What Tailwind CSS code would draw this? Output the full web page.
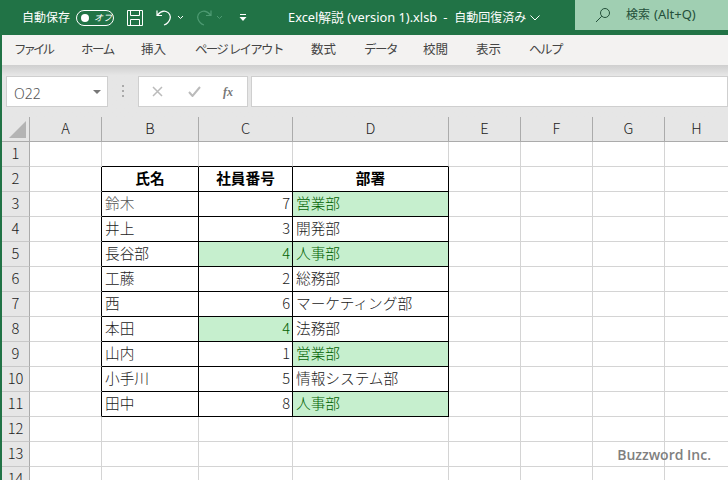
<!DOCTYPE html>
<html lang="ja">
<head>
<meta charset="UTF-8">
<title>Excel</title>
<script src="https://cdn.jsdelivr.net/npm/@tailwindcss/browser@4"></script>
</head>
<body class="w-[728px] h-[480px] overflow-hidden bg-white font-['Noto_Sans','Noto_Sans_CJK_JP',sans-serif] border-l-2 border-[#217346]">
<div class="w-[726px]">
  <!-- title bar -->
  <div class="h-[35px] bg-[#217346] text-white flex items-center text-[12px] -ml-[2px] w-[728px]">
    <span class="ml-[22px]">自動保存</span>
    <div class="ml-[6px] w-[38px] h-[16px] rounded-full border border-white flex items-center pl-[4px] gap-[5px]">
      <span class="w-[8px] h-[8px] rounded-full bg-white"></span><span class="text-[9px] leading-none italic">オフ</span>
    </div>
    <svg class="ml-[13px]" width="16" height="16" viewBox="0 0 16 16" fill="none" stroke="#fff"><path d="M.5.5h15v15H.5zM3.5.5v5h9v-5M3.5 15.5v-6h9v6"/></svg>
    <svg class="ml-[13px]" width="17" height="17" viewBox="0 0 17 17" fill="none" stroke="#fff" stroke-width="1.2"><path d="M1 1.5v5h5M1.5 6C4 3 7 1.5 10 2.500c3.500 1.200 5 4.500 4 7.500-.7 2-3 5-6 6"/></svg>
    <svg class="ml-[4px]" width="7" height="5" viewBox="0 0 7 5" fill="none" stroke="#fff"><path d="M1 1l2.500 2.500L6 1"/></svg>
    <svg class="ml-[11px]" width="17" height="17" viewBox="0 0 17 17" fill="none" stroke="#4d9a72" stroke-width="1.2"><path d="M16 1.500v5h-5M15.500 6C13 3 10 1.500 7 2.500 3.500 3.700 2 7 3 10c.7 2 3 5 6 6"/></svg>
    <svg class="ml-[4px]" width="7" height="5" viewBox="0 0 7 5" fill="none" stroke="#4d9a72"><path d="M1 1l2.500 2.500L6 1"/></svg>
    <svg class="ml-[16px]" width="8" height="8" viewBox="0 0 8 8" fill="#fff"><path d="M1 0h6v1H1zM.5 3h7L4 7z"/></svg>
    <span class="ml-[41px] whitespace-nowrap text-[12.8px]">Excel解説 (version 1).xlsb</span>
    <span class="ml-[6px] text-[13px]">-</span>
    <span class="ml-[7px] whitespace-nowrap">自動回復済み</span>
    <svg class="ml-[4px]" width="10" height="6" viewBox="0 0 10 6" fill="none" stroke="#fff"><path d="M.5.5L5 5 9.500.5"/></svg>
    <div class="ml-auto w-[153px] h-[30px] mb-[5px] bg-[#a0cfb2] text-[#24503a] flex items-center pl-[20px]">
      <svg width="16" height="16" viewBox="0 0 16 16" fill="none" stroke="#24503a"><circle cx="10" cy="6" r="4.500"/><path d="M6.800 9.200L1 15"/></svg>
      <span class="ml-[15px]">検索</span>
      <span class="ml-[4px] text-[13px]">(Alt+Q)</span>
    </div>
  </div>
  <!-- ribbon tabs -->
  <div class="h-[30px] bg-[#f3f2f1] flex items-center text-[12.5px] text-[#444] whitespace-nowrap">
    <span class="ml-[12px] w-[38px] tracking-[-3px]">ファイル</span>
    <span class="ml-[29px] w-[33px] tracking-[-1.5px]">ホーム</span>
    <span class="ml-[27px] w-[25px]">挿入</span>
    <span class="ml-[29px] w-[87px] tracking-[-1.7px]">ページ レイアウト</span>
    <span class="ml-[29px] w-[25px]">数式</span>
    <span class="ml-[28px] w-[32px] tracking-[-1.5px]">データ</span>
    <span class="ml-[27px] w-[25px]">校閲</span>
    <span class="ml-[28px] w-[25px]">表示</span>
    <span class="ml-[28px] w-[32px] tracking-[-1.5px]">ヘルプ</span>
  </div>
  <!-- formula bar -->
  <div class="h-[52px] bg-[#e6e6e6] bg-gradient-to-b from-[#cfcfcf] to-[#e6e6e6] to-[20%] flex items-start pt-[11px]">
    <div class="ml-[4px] w-[102px] h-[31px] bg-white border border-[#cfcfcf] flex items-center pl-[7px] pt-[4px] text-[14px] font-light text-[#555]">
      O22
      <svg class="ml-auto mr-[6px] -mt-[4px]" width="8" height="4" viewBox="0 0 8 4" fill="#777"><path d="M0 0h8L4 4z"/></svg>
    </div>
    <div class="ml-[14px] mt-[9px] flex flex-col gap-[3px]">
      <span class="w-[2px] h-[2px] bg-[#aaa]"></span><span class="w-[2px] h-[2px] bg-[#aaa]"></span><span class="w-[2px] h-[2px] bg-[#aaa]"></span>
    </div>
    <div class="ml-[14px] w-[110px] h-[31px] bg-white border border-[#cfcfcf] flex items-center">
      <svg class="ml-[13px]" width="11" height="11" viewBox="0 0 11 11" fill="none" stroke="#bbb" stroke-width="1.500"><path d="M1 1l9 9M10 1l-9 9"/></svg>
      <svg class="ml-[25px]" width="13" height="11" viewBox="0 0 13 11" fill="none" stroke="#bbb" stroke-width="2"><path d="M1 6l3.500 4L12 1"/></svg>
      <span class="ml-[22px] text-[12px] italic font-bold font-['Liberation_Serif',serif] text-[#777]">fx</span>
    </div>
    <div class="ml-[3px] flex-1 h-[31px] bg-white border border-[#cfcfcf]"></div>
  </div>
  <!-- sheet -->
  <div class="grid grid-cols-[28px_72px_97px_94px_156px_72px_72px_72px_63px] auto-rows-[25px] text-[14.67px] font-light text-[#222] font-['Noto_Sans_CJK_JP',sans-serif] [&>div]:pb-[2px]">
    <!-- header -->
    <div class="h-[25px] bg-[#e6e6e6] border-r border-b border-[#ababab] relative"><svg class="absolute right-[3px] bottom-[3px]" width="17" height="17" viewBox="0 0 17 17" fill="#b4b4b4"><path d="M17 0v17H0z"/></svg></div>
    <div class="bg-[#e6e6e6] border-r border-b border-[#ababab] flex items-center justify-center">A</div>
    <div class="bg-[#e6e6e6] border-r border-b border-[#ababab] flex items-center justify-center">B</div>
    <div class="bg-[#e6e6e6] border-r border-b border-[#ababab] flex items-center justify-center">C</div>
    <div class="bg-[#e6e6e6] border-r border-b border-[#ababab] flex items-center justify-center">D</div>
    <div class="bg-[#e6e6e6] border-r border-b border-[#ababab] flex items-center justify-center">E</div>
    <div class="bg-[#e6e6e6] border-r border-b border-[#ababab] flex items-center justify-center">F</div>
    <div class="bg-[#e6e6e6] border-r border-b border-[#ababab] flex items-center justify-center">G</div>
    <div class="bg-[#e6e6e6] border-b border-[#ababab] flex items-center justify-center">H</div>
    <!-- row 1 -->
    <div class="bg-[#e6e6e6] border-r border-b border-r-[#ababab] border-b-[#c8c8c8] flex items-center justify-center">1</div>
    <div class="border-r border-b border-[#d4d4d4]"></div>
    <div class="border-r border-b border-[#d4d4d4] border-b-black"></div>
    <div class="border-r border-b border-[#d4d4d4] border-b-black"></div>
    <div class="border-r border-b border-[#d4d4d4] border-b-black"></div>
    <div class="border-r border-b border-[#d4d4d4]"></div>
    <div class="border-r border-b border-[#d4d4d4]"></div>
    <div class="border-r border-b border-[#d4d4d4]"></div>
    <div class="border-b border-[#d4d4d4]"></div>
    <!-- row 2 -->
    <div class="bg-[#e6e6e6] border-r border-b border-r-[#ababab] border-b-[#c8c8c8] flex items-center justify-center">2</div>
    <div class="border-r border-b border-[#d4d4d4] border-r-black"></div>
    <div class="border-r border-b border-black flex items-center justify-center font-bold text-black">氏名</div>
    <div class="border-r border-b border-black flex items-center justify-center font-bold text-black">社員番号</div>
    <div class="border-r border-b border-black flex items-center justify-center font-bold text-black">部署</div>
    <div class="border-r border-b border-[#d4d4d4]"></div>
    <div class="border-r border-b border-[#d4d4d4]"></div>
    <div class="border-r border-b border-[#d4d4d4]"></div>
    <div class="border-b border-[#d4d4d4]"></div>
    <!-- row 3 -->
    <div class="bg-[#e6e6e6] border-r border-b border-r-[#ababab] border-b-[#c8c8c8] flex items-center justify-center">3</div>
    <div class="border-r border-b border-[#d4d4d4] border-r-black"></div>
    <div class="border-r border-b border-black flex items-center pl-[3px] text-[#555]">鈴木</div>
    <div class="border-r border-b border-black flex items-center justify-end pr-[2px]">7</div>
    <div class="border-r border-b border-black flex items-center pl-[3px] bg-[#c6efce] text-[#006100]">営業部</div>
    <div class="border-r border-b border-[#d4d4d4]"></div>
    <div class="border-r border-b border-[#d4d4d4]"></div>
    <div class="border-r border-b border-[#d4d4d4]"></div>
    <div class="border-b border-[#d4d4d4]"></div>
    <!-- row 4 -->
    <div class="bg-[#e6e6e6] border-r border-b border-r-[#ababab] border-b-[#c8c8c8] flex items-center justify-center">4</div>
    <div class="border-r border-b border-[#d4d4d4] border-r-black"></div>
    <div class="border-r border-b border-black flex items-center pl-[3px]">井上</div>
    <div class="border-r border-b border-black flex items-center justify-end pr-[2px]">3</div>
    <div class="border-r border-b border-black flex items-center pl-[3px]">開発部</div>
    <div class="border-r border-b border-[#d4d4d4]"></div>
    <div class="border-r border-b border-[#d4d4d4]"></div>
    <div class="border-r border-b border-[#d4d4d4]"></div>
    <div class="border-b border-[#d4d4d4]"></div>
    <!-- row 5 -->
    <div class="bg-[#e6e6e6] border-r border-b border-r-[#ababab] border-b-[#c8c8c8] flex items-center justify-center">5</div>
    <div class="border-r border-b border-[#d4d4d4] border-r-black"></div>
    <div class="border-r border-b border-black flex items-center pl-[3px]">長谷部</div>
    <div class="border-r border-b border-black flex items-center justify-end pr-[2px] bg-[#c6efce] text-[#006100]">4</div>
    <div class="border-r border-b border-black flex items-center pl-[3px] bg-[#c6efce] text-[#006100]">人事部</div>
    <div class="border-r border-b border-[#d4d4d4]"></div>
    <div class="border-r border-b border-[#d4d4d4]"></div>
    <div class="border-r border-b border-[#d4d4d4]"></div>
    <div class="border-b border-[#d4d4d4]"></div>
    <!-- row 6 -->
    <div class="bg-[#e6e6e6] border-r border-b border-r-[#ababab] border-b-[#c8c8c8] flex items-center justify-center">6</div>
    <div class="border-r border-b border-[#d4d4d4] border-r-black"></div>
    <div class="border-r border-b border-black flex items-center pl-[3px]">工藤</div>
    <div class="border-r border-b border-black flex items-center justify-end pr-[2px]">2</div>
    <div class="border-r border-b border-black flex items-center pl-[3px]">総務部</div>
    <div class="border-r border-b border-[#d4d4d4]"></div>
    <div class="border-r border-b border-[#d4d4d4]"></div>
    <div class="border-r border-b border-[#d4d4d4]"></div>
    <div class="border-b border-[#d4d4d4]"></div>
    <!-- row 7 -->
    <div class="bg-[#e6e6e6] border-r border-b border-r-[#ababab] border-b-[#c8c8c8] flex items-center justify-center">7</div>
    <div class="border-r border-b border-[#d4d4d4] border-r-black"></div>
    <div class="border-r border-b border-black flex items-center pl-[3px]">西</div>
    <div class="border-r border-b border-black flex items-center justify-end pr-[2px]">6</div>
    <div class="border-r border-b border-black flex items-center pl-[3px]">マーケティング部</div>
    <div class="border-r border-b border-[#d4d4d4]"></div>
    <div class="border-r border-b border-[#d4d4d4]"></div>
    <div class="border-r border-b border-[#d4d4d4]"></div>
    <div class="border-b border-[#d4d4d4]"></div>
    <!-- row 8 -->
    <div class="bg-[#e6e6e6] border-r border-b border-r-[#ababab] border-b-[#c8c8c8] flex items-center justify-center">8</div>
    <div class="border-r border-b border-[#d4d4d4] border-r-black"></div>
    <div class="border-r border-b border-black flex items-center pl-[3px]">本田</div>
    <div class="border-r border-b border-black flex items-center justify-end pr-[2px] bg-[#c6efce] text-[#006100]">4</div>
    <div class="border-r border-b border-black flex items-center pl-[3px]">法務部</div>
    <div class="border-r border-b border-[#d4d4d4]"></div>
    <div class="border-r border-b border-[#d4d4d4]"></div>
    <div class="border-r border-b border-[#d4d4d4]"></div>
    <div class="border-b border-[#d4d4d4]"></div>
    <!-- row 9 -->
    <div class="bg-[#e6e6e6] border-r border-b border-r-[#ababab] border-b-[#c8c8c8] flex items-center justify-center">9</div>
    <div class="border-r border-b border-[#d4d4d4] border-r-black"></div>
    <div class="border-r border-b border-black flex items-center pl-[3px]">山内</div>
    <div class="border-r border-b border-black flex items-center justify-end pr-[2px]">1</div>
    <div class="border-r border-b border-black flex items-center pl-[3px] bg-[#c6efce] text-[#006100]">営業部</div>
    <div class="border-r border-b border-[#d4d4d4]"></div>
    <div class="border-r border-b border-[#d4d4d4]"></div>
    <div class="border-r border-b border-[#d4d4d4]"></div>
    <div class="border-b border-[#d4d4d4]"></div>
    <!-- row 10 -->
    <div class="bg-[#e6e6e6] border-r border-b border-r-[#ababab] border-b-[#c8c8c8] flex items-center justify-center">10</div>
    <div class="border-r border-b border-[#d4d4d4] border-r-black"></div>
    <div class="border-r border-b border-black flex items-center pl-[3px]">小手川</div>
    <div class="border-r border-b border-black flex items-center justify-end pr-[2px]">5</div>
    <div class="border-r border-b border-black flex items-center pl-[3px]">情報システム部</div>
    <div class="border-r border-b border-[#d4d4d4]"></div>
    <div class="border-r border-b border-[#d4d4d4]"></div>
    <div class="border-r border-b border-[#d4d4d4]"></div>
    <div class="border-b border-[#d4d4d4]"></div>
    <!-- row 11 -->
    <div class="bg-[#e6e6e6] border-r border-b border-r-[#ababab] border-b-[#c8c8c8] flex items-center justify-center">11</div>
    <div class="border-r border-b border-[#d4d4d4] border-r-black"></div>
    <div class="border-r border-b border-black flex items-center pl-[3px]">田中</div>
    <div class="border-r border-b border-black flex items-center justify-end pr-[2px]">8</div>
    <div class="border-r border-b border-black flex items-center pl-[3px] bg-[#c6efce] text-[#006100]">人事部</div>
    <div class="border-r border-b border-[#d4d4d4]"></div>
    <div class="border-r border-b border-[#d4d4d4]"></div>
    <div class="border-r border-b border-[#d4d4d4]"></div>
    <div class="border-b border-[#d4d4d4]"></div>
    <!-- row 12 -->
    <div class="bg-[#e6e6e6] border-r border-b border-r-[#ababab] border-b-[#c8c8c8] flex items-center justify-center">12</div>
    <div class="border-r border-b border-[#d4d4d4]"></div>
    <div class="border-r border-b border-[#d4d4d4]"></div>
    <div class="border-r border-b border-[#d4d4d4]"></div>
    <div class="border-r border-b border-[#d4d4d4]"></div>
    <div class="border-r border-b border-[#d4d4d4]"></div>
    <div class="border-r border-b border-[#d4d4d4]"></div>
    <div class="border-r border-b border-[#d4d4d4]"></div>
    <div class="border-b border-[#d4d4d4]"></div>
    <!-- row 13 -->
    <div class="bg-[#e6e6e6] border-r border-b border-r-[#ababab] border-b-[#c8c8c8] flex items-center justify-center">13</div>
    <div class="border-r border-b border-[#d4d4d4]"></div>
    <div class="border-r border-b border-[#d4d4d4]"></div>
    <div class="border-r border-b border-[#d4d4d4]"></div>
    <div class="border-r border-b border-[#d4d4d4]"></div>
    <div class="border-r border-b border-[#d4d4d4]"></div>
    <div class="border-r border-b border-[#d4d4d4]"></div>
    <div class="border-r border-b border-[#d4d4d4] relative"><span class="absolute right-[-47px] top-[2px] whitespace-nowrap text-[14px] font-semibold text-[#808080] font-['Open_Sans',sans-serif]">Buzzword Inc.</span></div>
    <div class="border-b border-[#d4d4d4]"></div>
    <!-- row 14 -->
    <div class="bg-[#e6e6e6] border-r border-b border-r-[#ababab] border-b-[#c8c8c8] flex items-center justify-center">14</div>
    <div class="border-r border-b border-[#d4d4d4]"></div>
    <div class="border-r border-b border-[#d4d4d4]"></div>
    <div class="border-r border-b border-[#d4d4d4]"></div>
    <div class="border-r border-b border-[#d4d4d4]"></div>
    <div class="border-r border-b border-[#d4d4d4]"></div>
    <div class="border-r border-b border-[#d4d4d4]"></div>
    <div class="border-r border-b border-[#d4d4d4]"></div>
    <div class="border-b border-[#d4d4d4]"></div>
  </div>
</div>
</body>
</html>
